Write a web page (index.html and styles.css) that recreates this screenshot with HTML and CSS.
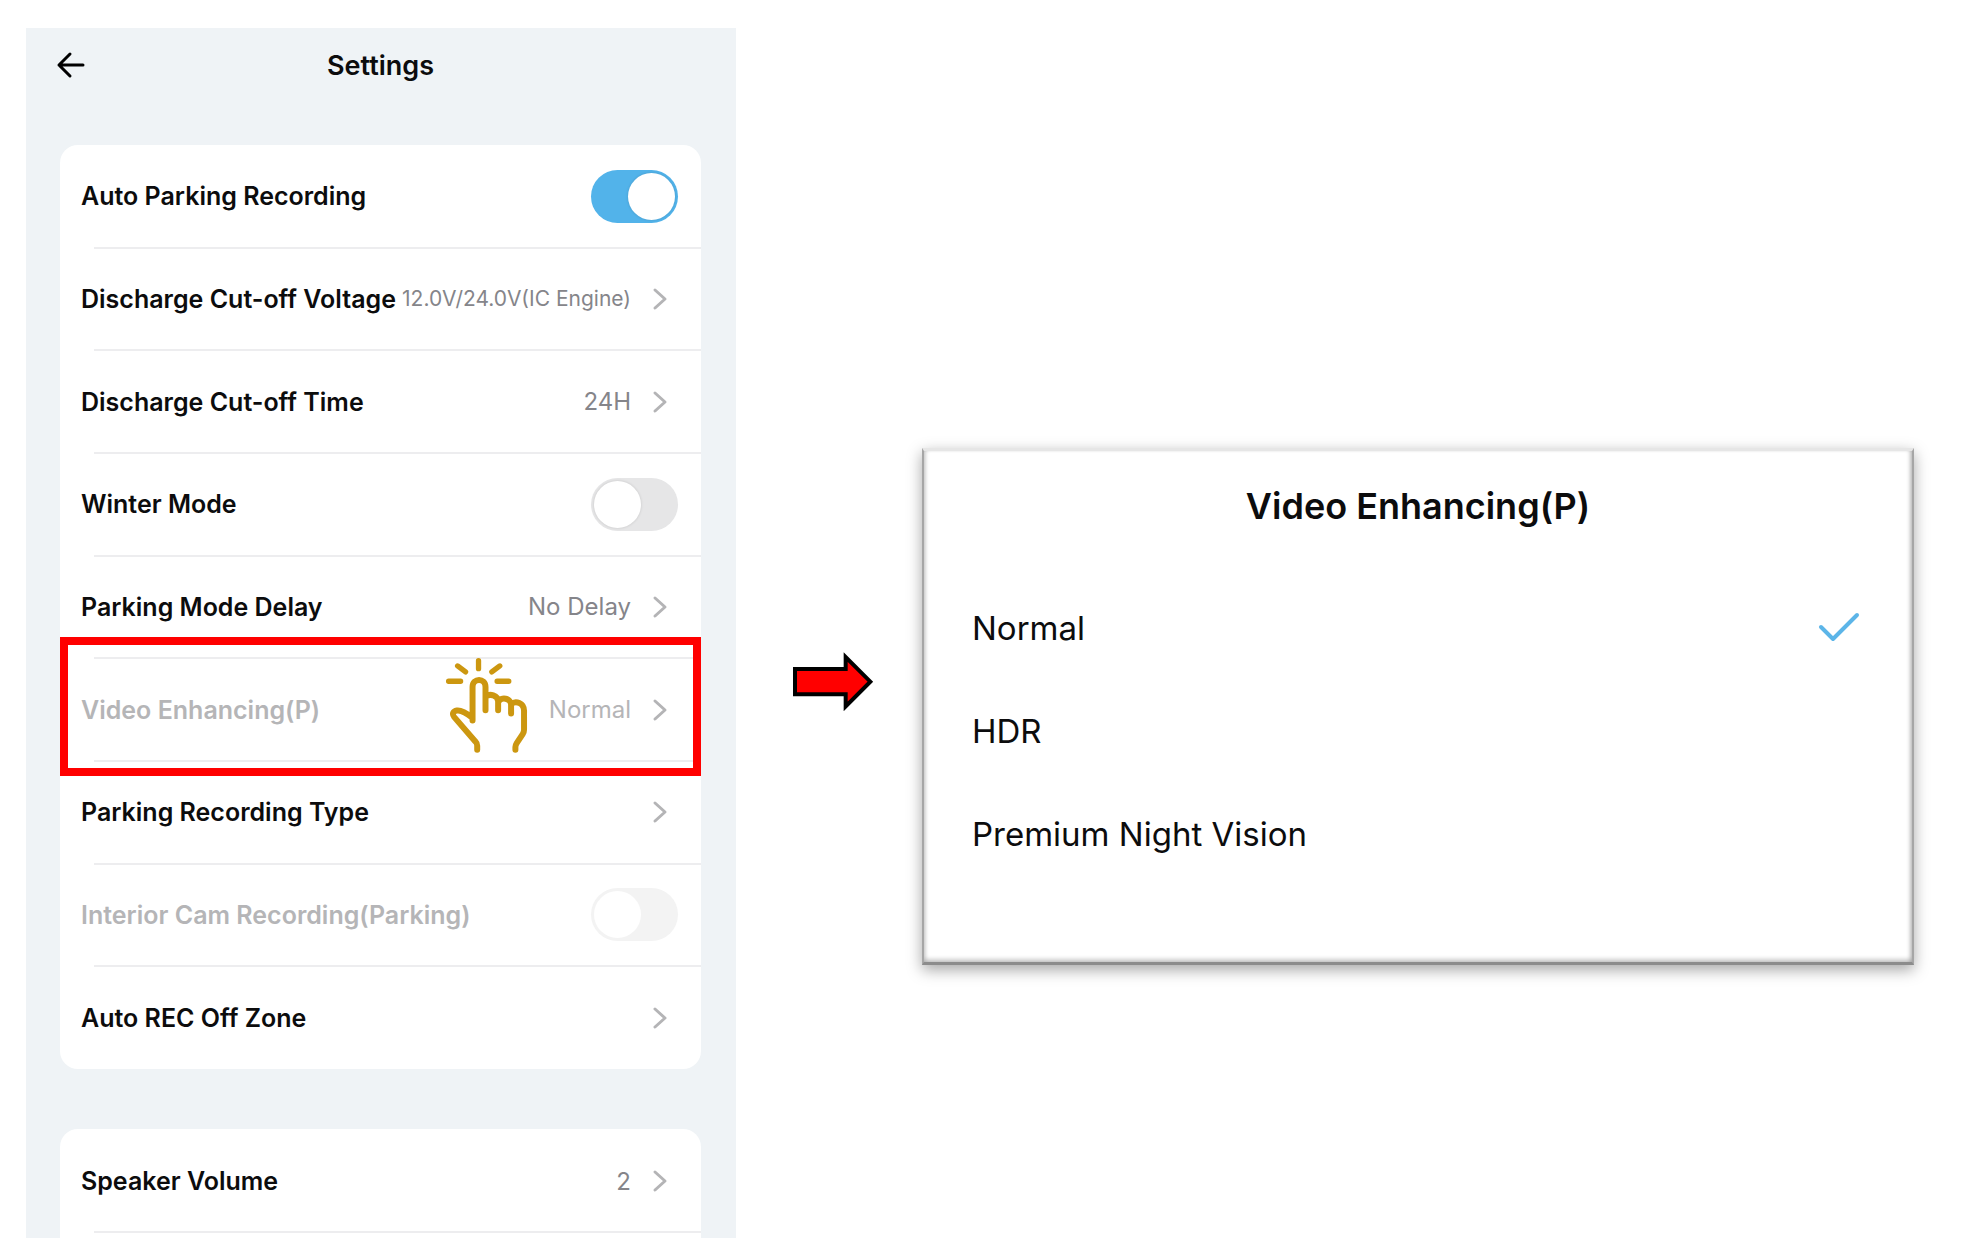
FILE: index.html
```
<!DOCTYPE html>
<html lang="en">
<head>
    <meta charset="UTF-8">
    <meta name="viewport" content="width=device-width, initial-scale=1.0">
    <title>Settings - Video Enhancing(P)</title>
    <link rel="stylesheet" href="styles.css">
</head>
<body>
    <svg class="defs" width="0" height="0" aria-hidden="true">
        <symbol id="chevron" viewBox="0 0 16 24">
            <path d="M3 3l10 9-10 9" fill="none" stroke="currentColor" stroke-width="3" stroke-linecap="round" stroke-linejoin="round"/>
        </symbol>
    </svg>

    <main class="guide">
        <!-- settings screen -->
        <section class="phone">
            <header class="topbar">
                <button class="back" aria-label="Back">
                    <svg width="30" height="28" viewBox="0 0 30 28"><path d="M14 3L3 14l11 11M3 14h24" fill="none" stroke="#000" stroke-width="3" stroke-linecap="round" stroke-linejoin="round"/></svg>
                </button>
                <h1>Settings</h1>
            </header>

            <div class="card">
                <label class="row">
                    <span class="name">Auto Parking Recording</span>
                    <input type="checkbox" class="switch" checked>
                </label>
                <button class="row">
                    <span class="name">Discharge Cut-off Voltage</span>
                    <span class="value small">12.0V/24.0V(IC Engine)</span>
                    <svg class="chevron"><use href="#chevron"/></svg>
                </button>
                <button class="row">
                    <span class="name">Discharge Cut-off Time</span>
                    <span class="value">24H</span>
                    <svg class="chevron"><use href="#chevron"/></svg>
                </button>
                <label class="row">
                    <span class="name">Winter Mode</span>
                    <input type="checkbox" class="switch">
                </label>
                <button class="row">
                    <span class="name">Parking Mode Delay</span>
                    <span class="value">No Delay</span>
                    <svg class="chevron"><use href="#chevron"/></svg>
                </button>
                <button class="row dimmed marked">
                    <span class="name">Video Enhancing(P)</span>
                    <span class="value">Normal</span>
                    <svg class="chevron"><use href="#chevron"/></svg>
                    <!-- tap hand -->
                    <svg class="hand" viewBox="46 50 248 292" aria-hidden="true">
                        <g fill="none" stroke="#cc9710" stroke-width="18" stroke-linecap="round" stroke-linejoin="round">
                            <path d="M146 61v24M83 77l24 18M210 77l-24 18M56 123h36M202 123h35" stroke-width="16"/>
                            <path d="M142 329v-12q0-7-5-12L73 231c-8-10-3-18 8-20 14-2 28 7 47 22v8V140c0-28 39-28 39 0v70v-40c12-12 38-4 38 14v26v-24c8-18 39-12 39 8v26v-28c14-12 39-4 39 20v57q0 7-4 13l-18 27q-4 6-4 12v8"/>
                        </g>
                    </svg>
                </button>
                <button class="row">
                    <span class="name">Parking Recording Type</span>
                    <svg class="chevron"><use href="#chevron"/></svg>
                </button>
                <label class="row dimmed">
                    <span class="name">Interior Cam Recording(Parking)</span>
                    <input type="checkbox" class="switch" disabled>
                </label>
                <button class="row">
                    <span class="name">Auto REC Off Zone</span>
                    <svg class="chevron"><use href="#chevron"/></svg>
                </button>
            </div>

            <div class="card more">
                <button class="row">
                    <span class="name">Speaker Volume</span>
                    <span class="value">2</span>
                    <svg class="chevron"><use href="#chevron"/></svg>
                </button>
            </div>
        </section>

        <svg class="arrow" viewBox="36 32 249 186" aria-hidden="true">
            <path d="M45 86h152V50l74 74-74 74v-36H45z" fill="#f00" stroke="#000" stroke-width="12"/>
        </svg>

        <!-- popup -->
        <section class="popup">
            <h2>Video Enhancing(P)</h2>
            <label class="option">Normal<input type="radio" name="enhance" checked>
                <svg class="tick" viewBox="0 0 42 32"><path d="M3 15l12 12L39 3" fill="none" stroke="#5cb5e8" stroke-width="4" stroke-linecap="round" stroke-linejoin="round"/></svg>
            </label>
            <label class="option">HDR<input type="radio" name="enhance">
                <svg class="tick" viewBox="0 0 42 32"><path d="M3 15l12 12L39 3" fill="none" stroke="#5cb5e8" stroke-width="4" stroke-linecap="round" stroke-linejoin="round"/></svg>
            </label>
            <label class="option">Premium Night Vision<input type="radio" name="enhance">
                <svg class="tick" viewBox="0 0 42 32"><path d="M3 15l12 12L39 3" fill="none" stroke="#5cb5e8" stroke-width="4" stroke-linecap="round" stroke-linejoin="round"/></svg>
            </label>
        </section>
    </main>
</body>
</html>
```
FILE: styles.css
```
* {
    box-sizing: border-box;
}
body {
    margin: 0;
    background: #fff;
    color: #0c0c0d;
    font-family: Inter, "Liberation Sans", sans-serif;
}
button {
    border: 0;
    background: none;
    color: inherit;
    font: inherit;
    text-align: left;
}
.defs {
    position: absolute;
}
.guide {
    display: grid;
    grid-template-columns: minmax(0, 710fr) auto minmax(0, 992fr);
    align-items: start;
    height: 100vh;
    padding: 28px 61px 0 26px;
    overflow: hidden;
}

/* settings screen */
.phone {
    display: flex;
    flex-direction: column;
    height: calc(100vh - 28px);
    padding: 0 35px 0 34px;
    background: #eff3f6;
    overflow: hidden;
}
.topbar {
    display: grid;
    grid-template-columns: 30px 1fr 30px;
    align-items: center;
    flex: none;
    height: 74px;
    margin: 0 -4px 43px;
}
.back {
    padding: 0;
    line-height: 0;
}
.topbar h1 {
    margin: 0;
    font-size: 27px;
    font-weight: 600;
    text-align: center;
}
.card {
    display: grid;
    grid-auto-rows: 1fr;
    flex: none;
    min-height: 924px;
    border-radius: 18px;
    background: #fff;
}
.more {
    grid-auto-rows: 104px;
    min-height: 160px;
    margin-top: 60px;
}
.row {
    position: relative;
    display: flex;
    align-items: center;
    padding: 0 23px 0 21px;
}
button.row {
    padding-right: 33px;
}
.row + .row::before,
.more .row::after {
    content: "";
    position: absolute;
    top: -1px;
    left: 34px;
    right: 0;
    height: 2px;
    background: #ededef;
}
.more .row::after {
    top: auto;
    bottom: 0;
}
.name {
    flex: 1;
    font-size: 25px;
    font-weight: 600;
    white-space: nowrap;
}
.value {
    color: #85858a;
    font-size: 24px;
    white-space: nowrap;
}
.small {
    font-size: 21px;
}
.chevron {
    width: 16px;
    height: 24px;
    margin-left: 21px;
    color: #b4b4b6;
}
.dimmed .name,
.dimmed .value {
    color: #b5b5b7;
}
.switch {
    appearance: none;
    width: 87px;
    height: 53px;
    margin: 0;
    padding: 3px;
    border-radius: 27px;
    background: #e6e6e7;
}
.switch::before {
    content: "";
    display: block;
    width: 47px;
    height: 47px;
    border-radius: 50%;
    background: #fff;
    box-shadow: 0 0 3px rgba(0, 0, 0, 0.15);
}
.switch:checked {
    background: #52b3ea;
}
.switch:checked::before {
    margin-left: auto;
}
.switch:disabled {
    background: #f3f3f3;
}
.switch:disabled::before {
    box-shadow: none;
}

/* red frame around the tapped row */
.marked::after {
    content: "";
    position: absolute;
    z-index: 1;
    inset: -21px 0 -15px 0;
    border: 8px solid #f00;
}
.hand {
    position: absolute;
    top: -1px;
    right: 173px;
    width: 83px;
    height: 97px;
}
.arrow {
    width: 83px;
    height: 62px;
    margin: 623px 47px 0 56px;
}

/* popup */
.popup {
    margin-top: 420px;
    padding: 0 48px 77px;
    border: 2px solid #a6a6a6;
    border-top: 3px solid #e6e6e6;
    border-bottom: 3px solid #8c8c8c;
    box-shadow: 0 5px 14px rgba(0, 0, 0, 0.35), inset 0 -3px 4px rgba(0, 0, 0, 0.2), inset 4px 0 4px -2px rgba(0, 0, 0, 0.12), inset -4px 0 4px -2px rgba(0, 0, 0, 0.2);
}
.popup h2 {
    margin: 0;
    padding: 35px 0 50px;
    font-size: 36px;
    font-weight: 600;
    line-height: 40px;
    text-align: center;
}
.option {
    display: flex;
    align-items: center;
    height: 103px;
    font-size: 33px;
}
.option input {
    appearance: none;
    margin: 0 auto;
}
.tick {
    display: none;
    width: 42px;
    height: 32px;
    margin-right: 4px;
}
.option input:checked + .tick {
    display: block;
}
```
